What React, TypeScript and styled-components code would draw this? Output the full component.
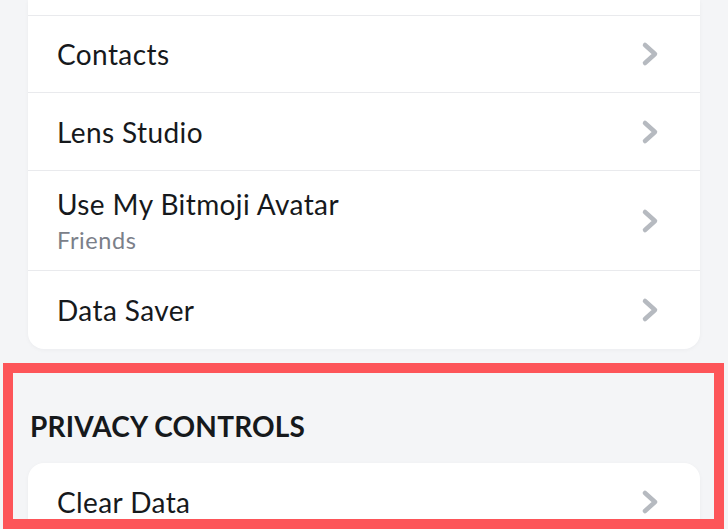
import React from "react";
import styled, { createGlobalStyle } from "styled-components";

const GlobalStyle = createGlobalStyle`
  html, body {
    margin: 0;
    padding: 0;
    background: #f4f5f7;
    font-family: Lato, "Open Sans", sans-serif;
    color: #16191c;
    overflow: hidden;
  }
  * {
    box-sizing: border-box;
  }
`;

const Page = styled.div`
  position: relative;
  padding: 0 28px;
  height: 529px;
`;

const Card = styled.div<{ $cutTop?: boolean; $cutBottom?: boolean }>`
  background: #ffffff;
  border-radius: ${(p) => (p.$cutTop ? "0" : "16px")} ${(p) => (p.$cutTop ? "0" : "16px")}
    ${(p) => (p.$cutBottom ? "0" : "16px")} ${(p) => (p.$cutBottom ? "0" : "16px")};
  box-shadow: 0 1px 4px rgba(20, 30, 50, 0.04);
  overflow: hidden;
`;

const Stub = styled.div`
  height: 16px;
  border-bottom: 1.5px solid #e9eaed;
`;

const Row = styled.div<{ $h: number; $last?: boolean }>`
  display: flex;
  align-items: center;
  justify-content: space-between;
  height: ${(p) => p.$h}px;
  padding: 0 41px 0 29px;
  border-bottom: ${(p) => (p.$last ? "none" : "1.5px solid #e9eaed")};
`;

const Labels = styled.div`
  display: flex;
  flex-direction: column;
`;

const Title = styled.span`
  font-size: 28px;
  line-height: 32px;
  letter-spacing: 0.4px;
  color: #16191c;
`;

const Sub = styled.span`
  font-size: 23.5px;
  line-height: 28px;
  letter-spacing: 0.6px;
  margin-top: 6px;
  color: #7b8089;
`;

const Section = styled.section`
  position: relative;
`;

const Header = styled.h2`
  margin: 0;
  padding: 61px 0 0 2px;
  height: 114px;
  font-size: 28px;
  font-weight: 700;
  line-height: 32px;
  letter-spacing: 0.2px;
  color: #16191c;
`;

const Highlight = styled.div`
  position: absolute;
  left: -25px;
  right: -24px;
  top: 14px;
  height: 166px;
  border: 10px solid #fd5559;
  pointer-events: none;
`;

const Chevron = () => (
  <svg width="18" height="26" viewBox="0 0 18 26">
    <polyline
      points="4,4 14,13 4,22"
      fill="none"
      stroke="#b6bac0"
      strokeWidth="4.5"
      strokeLinecap="round"
      strokeLinejoin="round"
    />
  </svg>
);

const items = [
  { title: "Contacts", h: 77 },
  { title: "Lens Studio", h: 78 },
  { title: "Use My Bitmoji Avatar", sub: "Friends", h: 100 },
  { title: "Data Saver", h: 78 },
];

export default function App() {
  return (
    <>
      <GlobalStyle />
      <Page>
        <Card $cutTop>
          <Stub />
          {items.map((item, i) => (
            <Row key={item.title} $h={item.h} $last={i === items.length - 1}>
              <Labels>
                <Title>{item.title}</Title>
                {item.sub && <Sub>{item.sub}</Sub>}
              </Labels>
              <Chevron />
            </Row>
          ))}
        </Card>
        <Section>
          <Header>PRIVACY CONTROLS</Header>
          <Card $cutBottom>
            <Row $h={78}>
              <Labels>
                <Title>Clear Data</Title>
              </Labels>
              <Chevron />
            </Row>
          </Card>
          <Highlight />
        </Section>
      </Page>
    </>
  );
}
